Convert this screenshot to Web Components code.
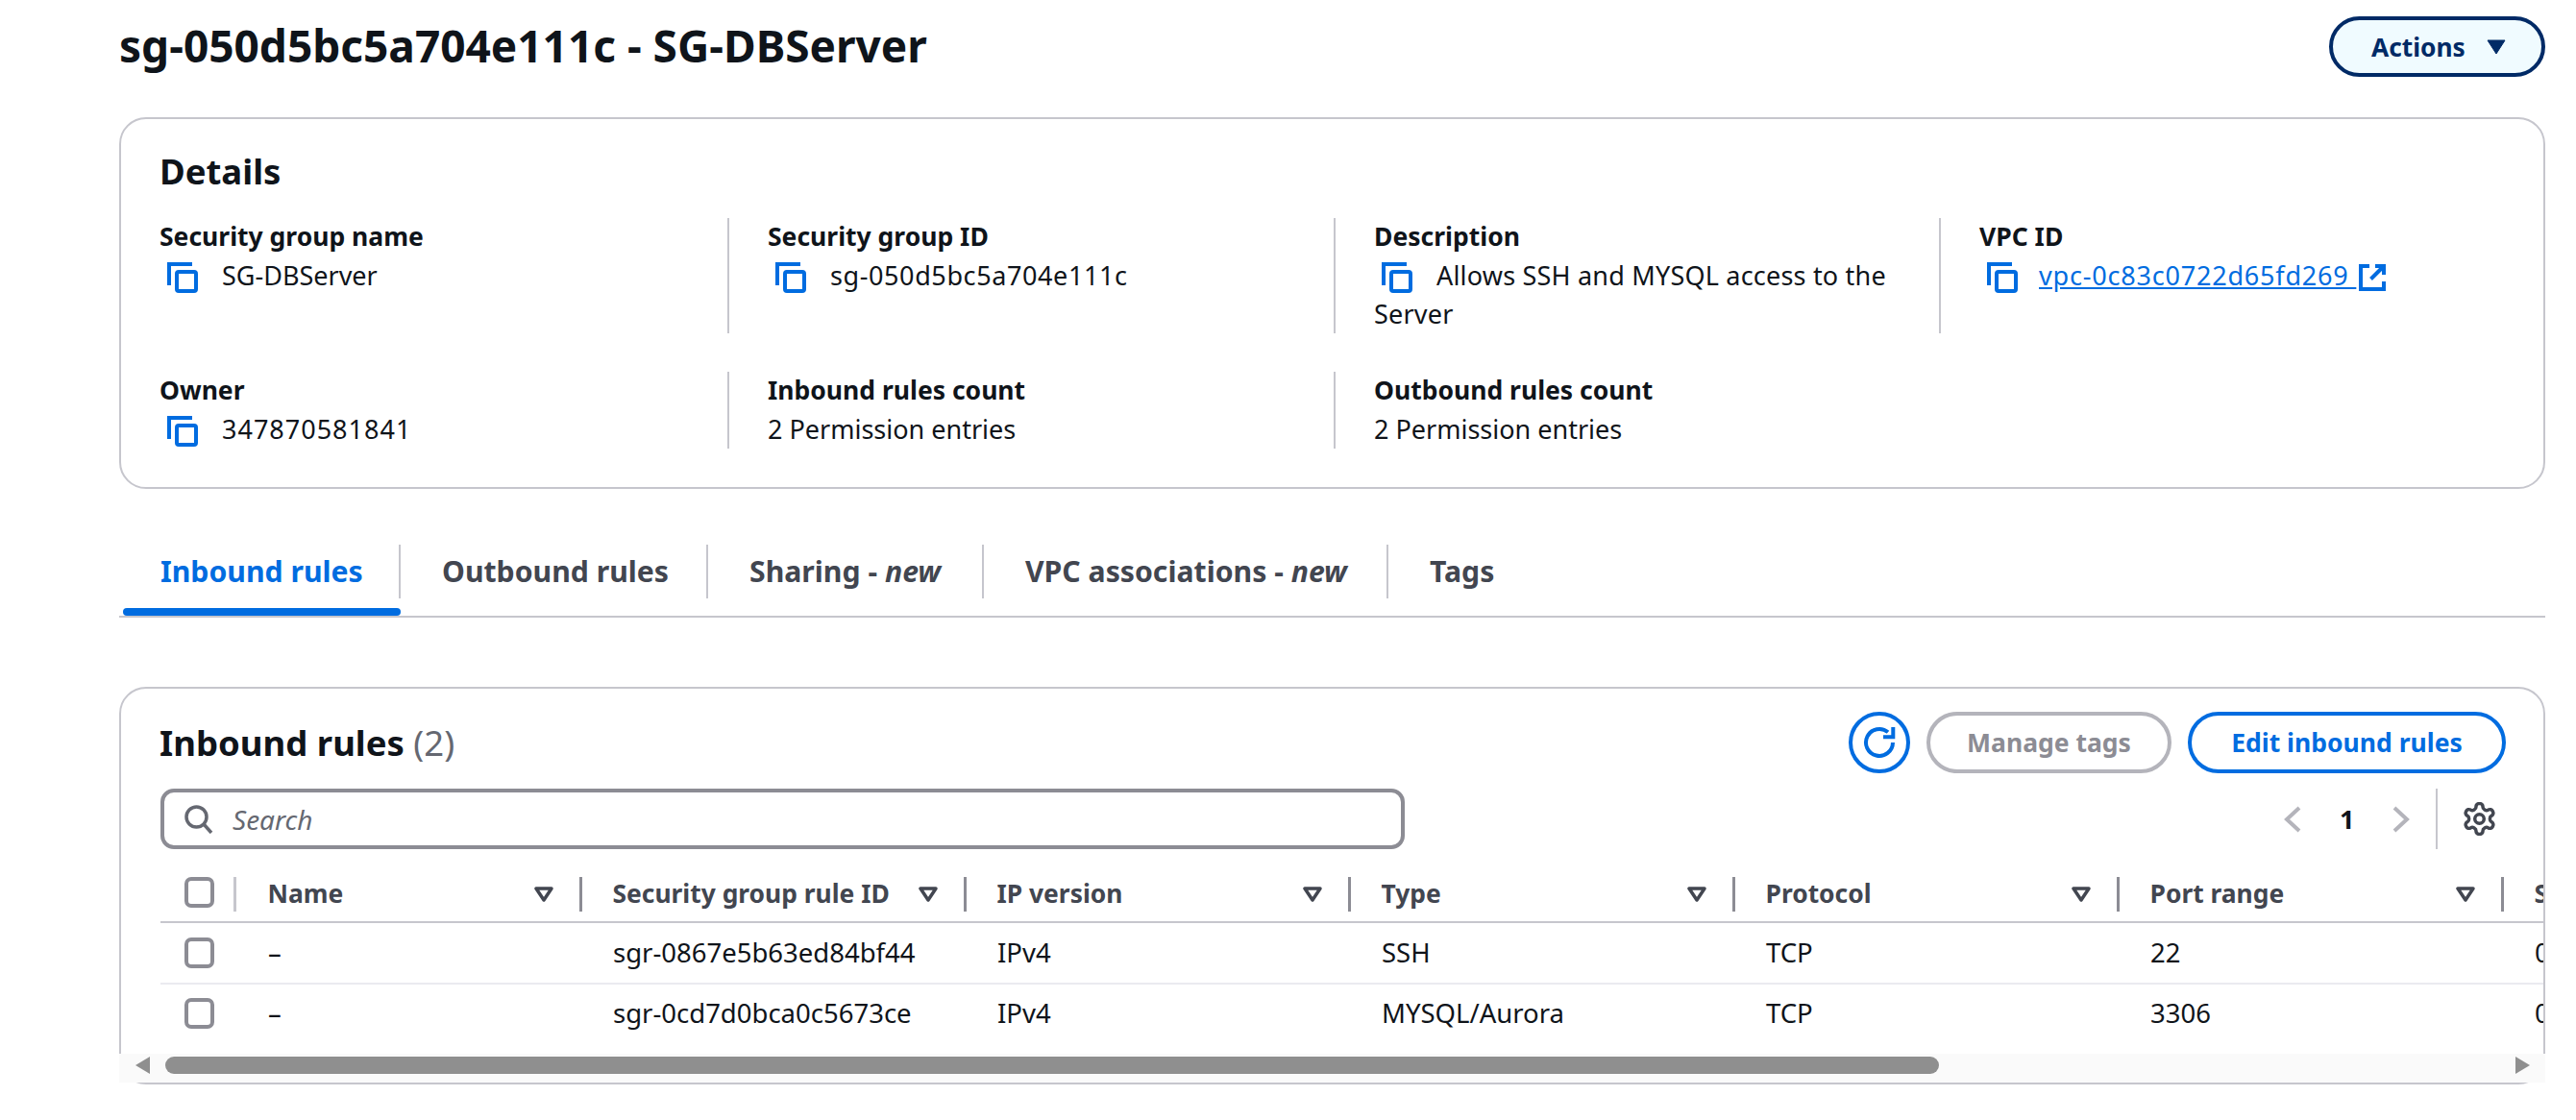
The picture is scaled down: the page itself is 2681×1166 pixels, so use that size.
<!doctype html>
<html lang="en">
<head>
<meta charset="utf-8">
<title>SG-DBServer</title>
<style>
  html, body { margin: 0; background: #fff; overflow: hidden; }
  body { font: 27px/40px "Noto Sans", "Open Sans", sans-serif; color: #0f141a; }
</style>
</head>
<body>
<sg-page>
  <sg-header slot="header">sg-050d5bc5a704e111c - SG-DBServer</sg-header>
  <sg-details>
    <sg-field label="Security group name" copy>SG-DBServer</sg-field>
    <sg-field label="Security group ID" copy divided style="--track: .6px">sg-050d5bc5a704e111c</sg-field>
    <sg-field label="Description" copy divided style="--track: .2px">Allows SSH and MYSQL access to the Server</sg-field>
    <sg-field label="VPC ID" copy divided link style="--track: .8px">vpc-0c83c0722d65fd269</sg-field>
    <sg-field label="Owner" copy style="--track: 1px">347870581841</sg-field>
    <sg-field label="Inbound rules count" divided>2 Permission entries</sg-field>
    <sg-field label="Outbound rules count" divided>2 Permission entries</sg-field>
  </sg-details>
  <sg-tabs></sg-tabs>
  <sg-rules></sg-rules>
</sg-page>

<script>
const COPY_ICON = `<svg class="copy" width="33" height="33" viewBox="0 0 33 33" fill="none" stroke="#006ce0" stroke-width="4">
  <path d="M3 25V3h24"/><rect x="11" y="11" width="20" height="20" rx="2"/></svg>`;

const EXTERNAL_ICON = `<svg class="ext" width="28" height="28" viewBox="0 0 28 28" fill="none" stroke="#006ce0" stroke-width="4">
  <path d="M11 2H2v24h24v-8"/><path d="M12.500 15.500L25 3M17 2h9v9"/></svg>`;

class SgPage extends HTMLElement {
  constructor() {
    super();
    this.attachShadow({ mode: 'open' });
    this.shadowRoot.innerHTML = `
      <style>
        :host { display: block; padding: 17px 32px 0 124px; height: 1149px; }
      </style>
      <slot name="header"></slot>
      <slot></slot>`;
  }
}

class SgHeader extends HTMLElement {
  constructor() {
    super();
    this.attachShadow({ mode: 'open' });
    this.shadowRoot.innerHTML = `
      <style>
        :host {
          display: flex;
          justify-content: space-between;
          align-items: center;
          margin-bottom: 42px;
        }
        h1 { margin: 0; font-size: 46px; line-height: 63px; font-weight: 700; position: relative; top: -1px; }
        button {
          display: flex;
          align-items: center;
          height: 63px;
          width: 225px;
          box-sizing: border-box;
          padding: 0 0 0 40px;
          gap: 22px;
          border: 4px solid #002a66;
          border-radius: 32px;
          background: #f0fbff;
          color: #002a66;
          font: 700 26.3px "Noto Sans", sans-serif;
        }
      </style>
      <h1><slot></slot></h1>
      <button>Actions
        <svg width="20" height="16" viewBox="0 0 20 16"><path d="M1 1h18l-9 14z" fill="#002a66" stroke="#002a66" stroke-linejoin="round"/></svg>
      </button>`;
  }
}

class SgDetails extends HTMLElement {
  constructor() {
    super();
    this.attachShadow({ mode: 'open' });
    this.shadowRoot.innerHTML = `
      <style>
        :host {
          display: block;
          box-sizing: border-box;
          height: 387px;
          border: 2px solid #c6c6cd;
          border-radius: 28px;
          padding: 34px 39px 0 40px;
        }
        h2 { margin: 0 0 29px; font-size: 36.5px; line-height: 40px; font-weight: 700; }
        .grid {
          display: grid;
          grid-template-columns: 591px 631px 630px 590px;
          grid-template-rows: 120px 80px;
          row-gap: 40px;
        }
      </style>
      <h2>Details</h2>
      <div class="grid"><slot></slot></div>`;
  }
}

class SgField extends HTMLElement {
  constructor() {
    super();
    this.attachShadow({ mode: 'open' });
  }

  connectedCallback() {
    const label = this.getAttribute('label');
    const copy = this.hasAttribute('copy') ? COPY_ICON : '';
    const link = this.hasAttribute('link');
    const value = link
      ? `<a href="#">${this.textContent} </a>${EXTERNAL_ICON}`
      : '<slot></slot>';
    this.shadowRoot.innerHTML = `
      <style>
        :host { display: block; line-height: 40px; }
        :host([divided]) { border-left: 2px solid #c6c6cd; padding-left: 40px; }
        :host([link]) .copy { margin-right: 22px; }
        .value { letter-spacing: var(--track, 0); }
        .label { font-weight: 700; font-size: 26.5px; margin-top: -1px; margin-bottom: 1px; }
        .copy { vertical-align: -8px; margin: 0 25px 0 7px; }
        .ext { vertical-align: -6px; margin-left: 3px; }
        a { color: #006ce0; text-decoration: underline; }
      </style>
      <div class="label">${label}</div>
      <div class="value">${copy}${value}</div>`;
  }
}

class SgTabs extends HTMLElement {
  constructor() {
    super();
    this.attachShadow({ mode: 'open' });
    this.shadowRoot.innerHTML = `
      <style>
        :host {
          display: flex;
          margin-top: 58px;
          padding-left: 4px;
          border-bottom: 2px solid #c6c6cd;
          font-size: 30.2px;
          font-weight: 700;
          color: #424650;
        }
        .tab { display: flex; flex-direction: column; }
        .text {
          height: 56px;
          line-height: 56px;
          box-sizing: border-box;
          padding-left: 43px;
          border-right: 2px solid #c6c6cd;
          white-space: nowrap;
        }
        .tab:nth-of-type(1) .text { width: 289px; padding-left: 39px; }
        .tab:nth-of-type(2) .text { width: 320px; }
        .tab:nth-of-type(3) .text { width: 287px; }
        .tab:nth-of-type(4) .text { width: 421px; }
        .tab:last-child .text { border: 0; }
        .bar { height: 8px; margin-top: 10px; border-radius: 4px; }
        .active { color: #006ce0; }
        .active .bar { background: #006ce0; }
        i { font-weight: 700; }
      </style>
      <div class="tab active"><div class="text">Inbound rules</div><div class="bar"></div></div>
      <div class="tab"><div class="text">Outbound rules</div><div class="bar"></div></div>
      <div class="tab"><div class="text">Sharing - <i>new</i></div><div class="bar"></div></div>
      <div class="tab"><div class="text">VPC associations - <i>new</i></div><div class="bar"></div></div>
      <div class="tab"><div class="text">Tags</div><div class="bar"></div></div>`;
  }
}

class SgCheckbox extends HTMLElement {
  constructor() {
    super();
    this.attachShadow({ mode: 'open' });
    this.shadowRoot.innerHTML = `
      <style>
        :host {
          display: block;
          box-sizing: border-box;
          width: 31px;
          height: 32px;
          border: 4px solid #8c8c94;
          border-radius: 7px;
        }
      </style>`;
  }
}

class SgColHead extends HTMLElement {
  constructor() {
    super();
    this.attachShadow({ mode: 'open' });
    this.shadowRoot.innerHTML = `
      <style>
        :host {
          display: flex;
          align-items: center;
          justify-content: space-between;
          box-sizing: border-box;
          height: 36px;
          padding: 0 27px 2px 31.5px;
          border-left: 3.5px solid #8c8c94;
          font-size: 26.4px;
          font-weight: 700;
          color: #424650;
          white-space: nowrap;
        }
        :host([first]) { border-left-color: #c6c6cd; padding-left: 32.5px; }
        svg { position: relative; top: 1px; }
      </style>
      <slot></slot>
      <svg width="20" height="16" viewBox="0 0 20 16" fill="none" stroke="#424650" stroke-width="3.5" stroke-linejoin="round"><path d="M2 2h16l-8 12z"/></svg>`;
  }
}

class SgRow extends HTMLElement {
  constructor() {
    super();
    this.attachShadow({ mode: 'open' });
    this.shadowRoot.innerHTML = `
      <style>
        :host {
          display: grid;
          grid-template-columns: var(--cols);
          align-items: center;
          height: 62px;
          border-bottom: 2px solid #ebebf0;
          font-size: 27.5px;
        }
        :host(:last-of-type) { border-bottom: 0; height: 60px; }
        ::slotted(*) { padding-left: 35px; white-space: nowrap; }
        ::slotted(sg-checkbox) { padding: 0; margin-left: 25px; }
        ::slotted(.name) { padding-left: 36px; }
      </style>
      <slot></slot>`;
  }
}

class SgRules extends HTMLElement {
  constructor() {
    super();
    this.attachShadow({ mode: 'open' });
    const heads = ['Name', 'Security group rule ID', 'IP version', 'Type', 'Protocol', 'Port range', 'Source'];
    const rows = [
      ['sgr-0867e5b63ed84bf44', 'IPv4', 'SSH', 'TCP', '22', '0.0.0.0/0'],
      ['sgr-0cd7d0bca0c5673ce', 'IPv4', 'MYSQL/Aurora', 'TCP', '3306', '0.0.0.0/0'],
    ];
    this.shadowRoot.innerHTML = `
      <style>
        :host {
          display: block;
          box-sizing: border-box;
          margin-top: 72px;
          height: 414px;
          border: 2px solid #c6c6cd;
          border-radius: 28px;
          padding-top: 24px;
          --cols: 76px 360px 400px 400px 400px 400px 400px 400px;
        }
        .top { display: flex; justify-content: space-between; align-items: center; padding: 0 39px 0 40px; height: 64px; }
        h2 { margin: 0; font-size: 36.5px; line-height: 40px; font-weight: 700; }
        h2 span { font-weight: 400; color: #656871; }
        .actions { display: flex; gap: 17px; }
        .btn {
          box-sizing: border-box;
          height: 64px;
          border: 4px solid #006ce0;
          border-radius: 32px;
          background: #fff;
          color: #006ce0;
          font: 700 26.5px "Noto Sans", sans-serif;
        }
        .btn.off { border-color: #b4b4bb; color: #8c8c94; width: 255px; padding: 0; }
        .btn.edit { width: 331px; padding: 0; }
        .btn.round { width: 64px; padding: 0; display: grid; place-items: center; }
        .filter { display: flex; justify-content: space-between; height: 63px; margin: 16px 39px 0 41px; }
        .search {
          display: flex;
          align-items: center;
          gap: 20px;
          box-sizing: border-box;
          width: 1295px;
          padding-left: 21px;
          border: 4px solid #8c8c94;
          border-radius: 14px;
          font-size: 28px;
          font-style: italic;
          color: #656871;
        }
        .pager { display: flex; align-items: center; padding-right: 10.500px; }
        .pager b { width: 15px; margin: 0 40px; font-weight: 700; line-height: 40px; }
        .pager .sep { width: 2px; height: 63px; background: #c6c6cd; margin: 0 25.500px 0 27px; }
        .table { margin: 29px 0 0 41px; overflow: hidden; height: 174px; }
        .head {
          display: grid;
          grid-template-columns: var(--cols);
          width: max-content;
          height: 46px;
          border-bottom: 2px solid #c6c6cd;
        }
        .head sg-checkbox { margin-left: 25px; }
        sg-row { width: max-content; }
        .track {
          display: flex;
          align-items: center;
          box-sizing: border-box;
          height: 30px;
          margin: 10px -2px 0;
          padding: 0 16px 6px 17px;
          background: #fafafa;
          position: relative;
        }
        .thumb { height: 18px; width: 1846px; margin-left: 16px; background: #8f8f8f; border-radius: 9px; }
        .track svg:last-child { margin-left: auto; }
      </style>
      <div class="top">
        <h2>Inbound rules <span>(2)</span></h2>
        <div class="actions">
          <button class="btn round">
            <svg width="34" height="34" viewBox="0 0 34 34" fill="none" stroke="#006ce0" stroke-width="4">
              <path d="M26 6.200A14 14 0 1 0 31 17"/><path d="M31.300 1v10.300H21"/>
            </svg>
          </button>
          <button class="btn off">Manage tags</button>
          <button class="btn edit">Edit inbound rules</button>
        </div>
      </div>
      <div class="filter">
        <div class="search">
          <svg width="30" height="30" viewBox="0 0 30 30" fill="none" stroke="#656871" stroke-width="3.5">
            <circle cx="12.500" cy="12.500" r="10.500"/><path d="M20 20l8 9"/>
          </svg>
          Search
        </div>
        <div class="pager">
          <svg width="18" height="28" viewBox="0 0 18 28" fill="none" stroke="#b4b4bb" stroke-width="4"><path d="M16 2L3 14l13 12"/></svg>
          <b>1</b>
          <svg width="18" height="28" viewBox="0 0 18 28" fill="none" stroke="#b4b4bb" stroke-width="4"><path d="M2 2l13 12L2 26"/></svg>
          <div class="sep"></div>
          <svg width="35" height="35" viewBox="1 1 22 22" fill="none" stroke="#424650" stroke-width="2.200">
            <circle cx="12" cy="12" r="3"/>
            <path d="M12.220 2h-.44a2 2 0 0 0-2 2v.18a2 2 0 0 1-1 1.730l-.43.250a2 2 0 0 1-2 0l-.15-.08a2 2 0 0 0-2.730.730l-.22.380a2 2 0 0 0 .730 2.730l.15.100a2 2 0 0 1 1 1.720v.510a2 2 0 0 1-1 1.740l-.15.090a2 2 0 0 0-.730 2.730l.22.380a2 2 0 0 0 2.730.730l.15-.08a2 2 0 0 1 2 0l.43.250a2 2 0 0 1 1 1.730V20a2 2 0 0 0 2 2h.44a2 2 0 0 0 2-2v-.18a2 2 0 0 1 1-1.730l.43-.25a2 2 0 0 1 2 0l.15.08a2 2 0 0 0 2.730-.73l.22-.39a2 2 0 0 0-.73-2.730l-.15-.08a2 2 0 0 1-1-1.740v-.5a2 2 0 0 1 1-1.740l.15-.09a2 2 0 0 0 .73-2.730l-.22-.38a2 2 0 0 0-2.730-.73l-.15.08a2 2 0 0 1-2 0l-.43-.25a2 2 0 0 1-1-1.730V4a2 2 0 0 0-2-2z"/>
          </svg>
        </div>
      </div>
      <div class="table">
        <div class="head">
          <sg-checkbox></sg-checkbox>
          ${heads.map((h, i) => `<sg-col-head ${i ? '' : 'first'}>${h}</sg-col-head>`).join('')}
        </div>
        ${rows.map(r => `<sg-row>
          <sg-checkbox></sg-checkbox>
          <div class="name">–</div>
          ${r.map(c => `<div>${c}</div>`).join('')}
        </sg-row>`).join('')}
      </div>
      <div class="track">
        <svg width="15" height="18" viewBox="0 0 15 18"><path d="M15 0v18L0 9z" fill="#8f8f8f"/></svg>
        <div class="thumb"></div>
        <svg width="15" height="18" viewBox="0 0 15 18"><path d="M0 0v18l15-9z" fill="#8f8f8f"/></svg>
      </div>`;
  }
}

customElements.define('sg-page', SgPage);
customElements.define('sg-header', SgHeader);
customElements.define('sg-details', SgDetails);
customElements.define('sg-field', SgField);
customElements.define('sg-tabs', SgTabs);
customElements.define('sg-checkbox', SgCheckbox);
customElements.define('sg-col-head', SgColHead);
customElements.define('sg-row', SgRow);
customElements.define('sg-rules', SgRules);
</script>
</body>
</html>
